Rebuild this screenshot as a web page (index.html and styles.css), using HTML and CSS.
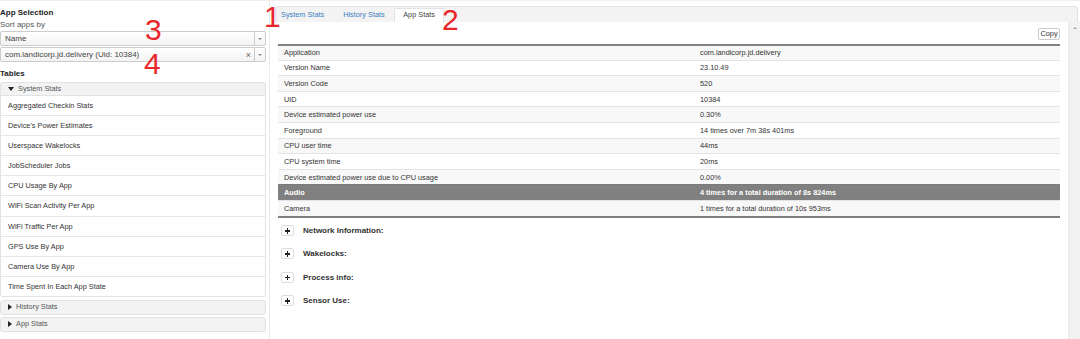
FILE: index.html
```html
<!DOCTYPE html>
<html lang="en">
<head>
    <meta charset="UTF-8">
    <title>Battery Historian - App Stats</title>
    <link rel="stylesheet" href="styles.css">
</head>
<body>
    <div class="page">
        <aside class="sidebar">
            <h4 class="side-title">App Selection</h4>
            <div class="side-label">Sort apps by</div>
            <div class="select">
                <span class="select-text">Name</span>
                <span class="select-arrow"><i class="arrow-down"></i></span>
            </div>
            <div class="select">
                <span class="select-text">com.landicorp.jd.delivery (Uid: 10384)</span>
                <span class="select-clear">&times;</span>
                <span class="select-arrow"><i class="arrow-down"></i></span>
            </div>
            <h4 class="side-title tables-title">Tables</h4>

            <div class="acc-header open"><span class="caret"><i class="caret-down"></i></span>System Stats</div>
            <ul class="acc-list">
                <li>Aggregated Checkin Stats</li>
                <li>Device's Power Estimates</li>
                <li>Userspace Wakelocks</li>
                <li>JobScheduler Jobs</li>
                <li>CPU Usage By App</li>
                <li>WiFi Scan Activity Per App</li>
                <li>WiFi Traffic Per App</li>
                <li>GPS Use By App</li>
                <li>Camera Use By App</li>
                <li>Time Spent In Each App State</li>
            </ul>
            <div class="acc-header closed"><span class="caret"><i class="caret-right"></i></span>History Stats</div>
            <div class="acc-header closed"><span class="caret"><i class="caret-right"></i></span>App Stats</div>
        </aside>

        <main class="main">
            <div class="tabs">
                <a class="tab">System Stats</a>
                <a class="tab">History Stats</a>
                <a class="tab active">App Stats</a>
            </div>
            <div class="tab-body">
                <div class="content">
                    <div class="copy-row"><button class="copy-btn">Copy</button></div>
                    <table class="stats">
                        <tr><td>Application</td><td>com.landicorp.jd.delivery</td></tr>
                        <tr><td>Version Name</td><td>23.10.49</td></tr>
                        <tr><td>Version Code</td><td>520</td></tr>
                        <tr><td>UID</td><td>10384</td></tr>
                        <tr><td>Device estimated power use</td><td>0.30%</td></tr>
                        <tr><td>Foreground</td><td>14 times over 7m 38s 401ms</td></tr>
                        <tr><td>CPU user time</td><td>44ms</td></tr>
                        <tr><td>CPU system time</td><td>20ms</td></tr>
                        <tr><td>Device estimated power use due to CPU usage</td><td>0.00%</td></tr>
                        <tr class="selected"><td>Audio</td><td>4 times for a total duration of 8s 824ms</td></tr>
                        <tr><td>Camera</td><td>1 times for a total duration of 10s 953ms</td></tr>
                    </table>

                    <div class="sections">
                        <div class="section"><span class="plus"></span>Network Information:</div>
                        <div class="section"><span class="plus"></span>Wakelocks:</div>
                        <div class="section"><span class="plus"></span>Process info:</div>
                        <div class="section"><span class="plus"></span>Sensor Use:</div>
                    </div>
                </div>
                <div class="scrollbar"><i class="scroll-up"></i></div>
            </div>
        </main>
    </div>

    <!-- red annotation marks -->
    <span class="mark mark-1">1</span>
    <span class="mark mark-2">2</span>
    <span class="mark mark-3">3</span>
    <span class="mark mark-4">4</span>
</body>
</html>
```

FILE: styles.css
```css
body {
    margin: 0;
    background: #fff;
    font-family: "Liberation Sans", Arial, sans-serif;
    font-size: 8px;
    color: #333;
    overflow: hidden;
    position: relative;
    height: 339px;
    border-top: 1px solid #eee;
    box-sizing: border-box;
}

.page {
    display: flex;
    height: 338px;
}

/* ===== SIDEBAR ===== */
.sidebar {
    width: 266px;
    flex-shrink: 0;
    padding-top: 6px;
}

.side-title {
    margin: 0;
    font-size: 8px;
    font-weight: bold;
    color: #222;
    line-height: 11px;
}

.side-label {
    font-size: 8px;
    color: #555;
    line-height: 12px;
    margin-top: 1px;
}

.select {
    display: flex;
    align-items: center;
    height: 13px;
    border: 1px solid #ccc;
    border-radius: 2px;
    background: linear-gradient(#fff, #f3f3f3);
    margin-bottom: 1px;
    color: #444;
}

.select-text {
    flex: 1;
    padding-left: 4px;
    font-size: 8px;
}

.select-clear {
    width: 11px;
    text-align: center;
    color: #666;
    font-size: 9px;
}

.select-arrow {
    width: 10px;
    height: 100%;
    border-left: 1px solid #ccc;
    display: flex;
    align-items: center;
    justify-content: center;
}

.arrow-down {
    width: 0;
    height: 0;
    border-left: 2px solid transparent;
    border-right: 2px solid transparent;
    border-top: 2px solid #888;
}

.tables-title {
    margin-top: 6px;
    margin-bottom: 3px;
}

.acc-header {
    height: 12px;
    line-height: 12px;
    background: #f3f3f3;
    border: 1px solid #e2e2e2;
    border-radius: 3px;
    padding-left: 7px;
    color: #555;
    font-size: 7.33px;
    display: flex;
    align-items: center;
}

.acc-header.open {
    border-radius: 3px 3px 0 0;
}

.acc-header.closed {
    height: 13px;
    margin-top: 2px;
}

.acc-list + .acc-header {
    margin-top: 3px;
}

.caret {
    width: 10px;
    display: flex;
    align-items: center;
}

.acc-header.closed .caret {
    width: 8px;
}

.caret-down {
    width: 0;
    height: 0;
    border-left: 3px solid transparent;
    border-right: 3px solid transparent;
    border-top: 4px solid #222;
}

.caret-right {
    width: 0;
    height: 0;
    border-top: 3px solid transparent;
    border-bottom: 3px solid transparent;
    border-left: 4px solid #222;
}

.acc-list {
    list-style: none;
    margin: 0;
    padding: 0;
    border: 1px solid #e2e2e2;
    border-top: none;
    border-radius: 0 0 3px 3px;
}

.acc-list li {
    height: 19.1px;
    line-height: 19px;
    padding-left: 7px;
    border-top: 1px solid #e6e6e6;
    color: #333;
    font-size: 7.33px;
}

.acc-list li:first-child {
    border-top: none;
}

/* ===== MAIN ===== */
.main {
    flex: 1;
    margin-left: 3px;
    border-left: 1px solid #eaeaea;
    display: flex;
    flex-direction: column;
    padding-top: 5px;
}

.tabs {
    display: flex;
    height: 15px;
    margin-left: 5px;
    margin-right: 2px;
    background: #f3f3f3;
    border: 1px solid #e2e2e2;
    border-bottom: none;
    border-radius: 3px 3px 0 0;
    align-items: flex-end;
}

.tab {
    padding: 0 9.5px;
    height: 13px;
    line-height: 12px;
    color: #3a7fc1;
    font-size: 7.33px;
}

.tab:first-child {
    padding-left: 5px;
}

.tab.active {
    background: #fff;
    color: #444;
    border: 1px solid #e2e2e2;
    border-bottom: none;
    border-radius: 2px 2px 0 0;
    padding: 0 8px;
}

.tab-body {
    flex: 1;
    display: flex;
}

.content {
    flex: 1;
    padding: 6px 8px 0 8px;
}

.copy-row {
    display: flex;
    justify-content: flex-end;
    height: 16px;
}

.copy-btn {
    font-family: inherit;
    font-size: 7.33px;
    color: #333;
    background: #fff;
    border: 1px solid #ccc;
    border-radius: 2px;
    padding: 0;
    width: 22px;
    height: 12px;
    line-height: 10px;
    text-align: center;
}

.stats {
    width: 100%;
    border-collapse: collapse;
    border-top: 2px solid #808080;
    border-bottom: 2px solid #808080;
}

.stats td {
    height: 14.6px;
    padding: 0 6px;
    border-top: 1px solid #e4e4e4;
    font-size: 7.33px;
    color: #333;
}

.stats td:first-child {
    width: 404px;
}

.stats tr:first-child td {
    border-top: none;
    height: 13.6px;
}

.stats tr:nth-child(odd) td {
    background: #f8f8f8;
}

.stats tr.selected td {
    background: #808080;
    color: #fff;
    font-weight: bold;
    border-top: 1px solid #7a7a7a;
}

.sections {
    padding-top: 1.5px;
}

.section {
    display: flex;
    align-items: center;
    height: 23.3px;
    font-weight: bold;
    font-size: 8px;
    color: #333;
    padding-left: 3px;
}

.plus {
    width: 11px;
    height: 9px;
    border: 1px solid #ddd;
    border-radius: 2px;
    margin-right: 9px;
    position: relative;
    background: #fff;
}

.plus::before,
.plus::after {
    content: '';
    position: absolute;
    background: #222;
}

.plus::before {
    left: 3px;
    top: 4px;
    width: 5px;
    height: 1.5px;
}

.plus::after {
    left: 4.75px;
    top: 2px;
    width: 1.5px;
    height: 5.5px;
}

.scrollbar {
    width: 11px;
    background: #f1f1f1;
    border-left: 1px solid #e8e8e8;
    display: flex;
    justify-content: center;
}

.scroll-up {
    margin-top: 5px;
    width: 0;
    height: 0;
    border-left: 2px solid transparent;
    border-right: 2px solid transparent;
    border-bottom: 2px solid #a3a3a3;
}

/* ===== ANNOTATIONS ===== */
.mark {
    position: absolute;
    color: #e8262b;
    font-family: "Liberation Sans", Arial, sans-serif;
    font-size: 30px;
    line-height: 30px;
}

.mark-1 { left: 264px; top: 1px; }
.mark-2 { left: 442px; top: 4px; }
.mark-3 { left: 145px; top: 14px; }
.mark-4 { left: 144px; top: 48px; }
```
